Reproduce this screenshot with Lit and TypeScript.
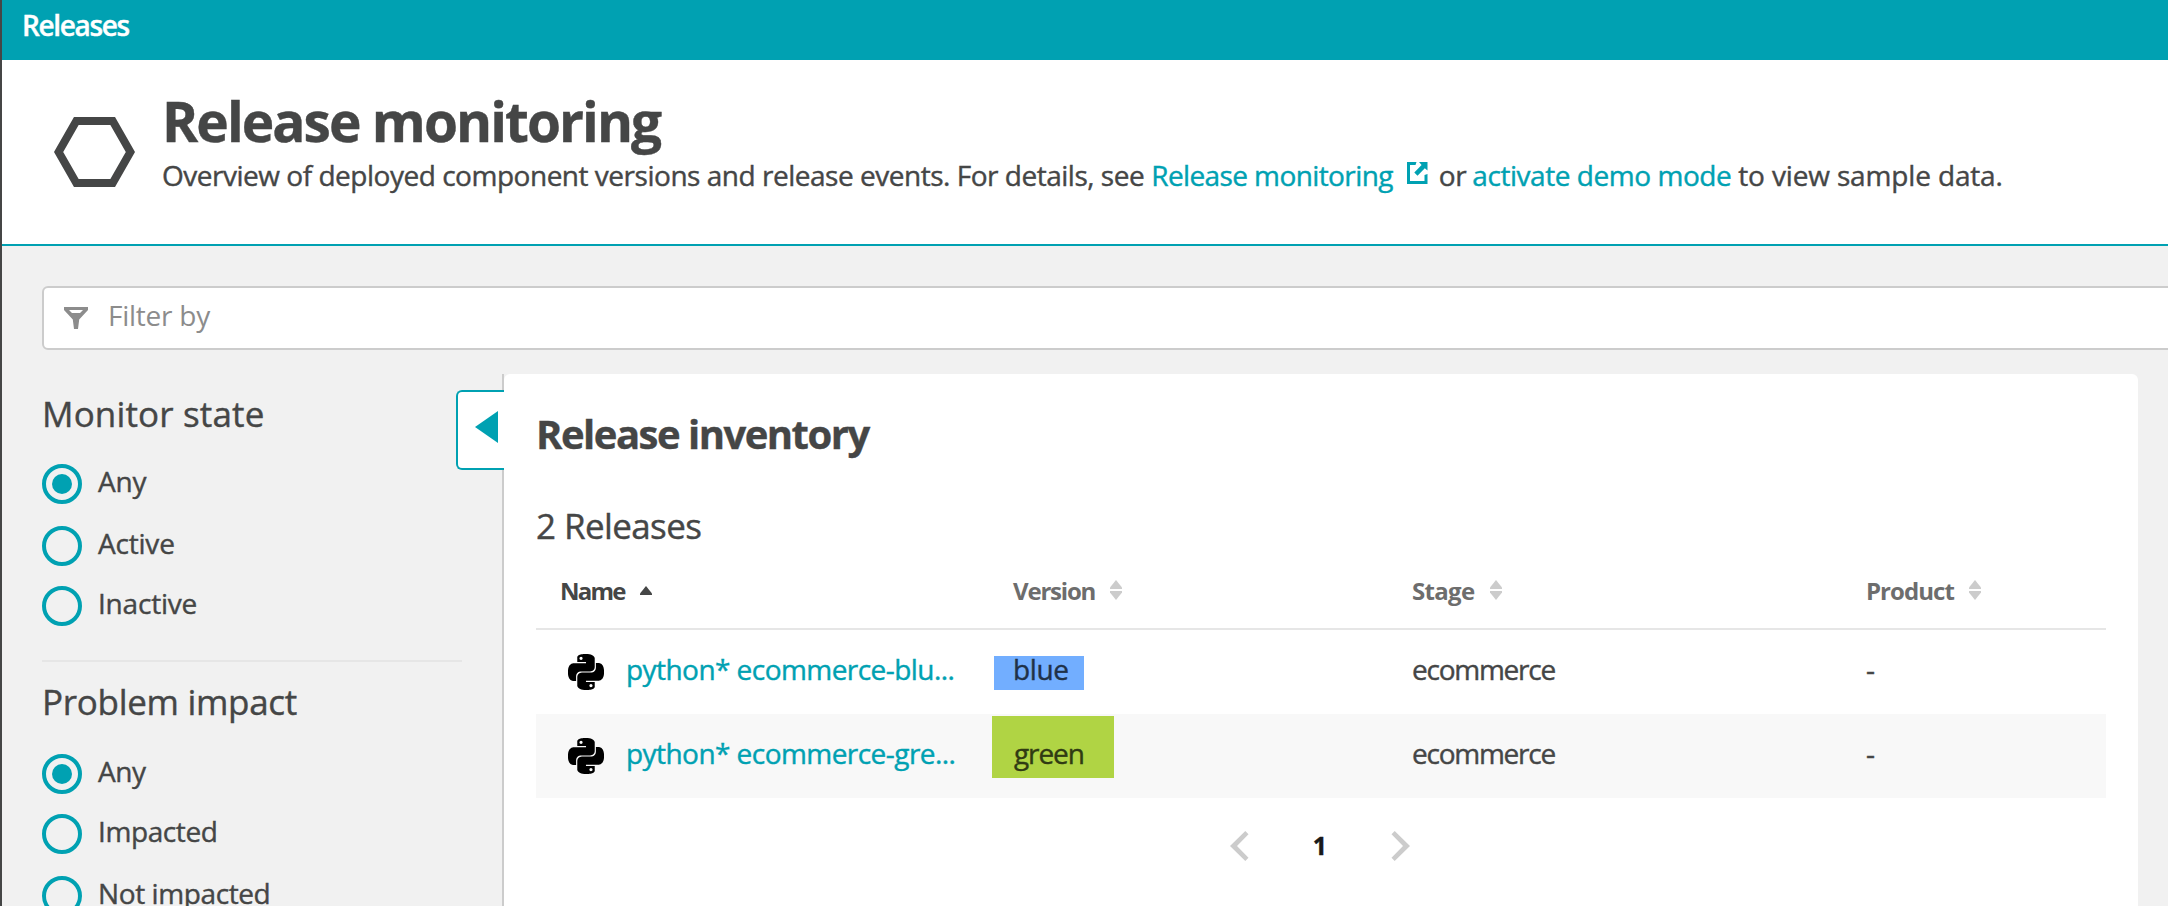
import { LitElement, html, svg, css } from "lit";
import { customElement } from "lit/decorators.js";
import { classMap } from "lit/directives/class-map.js";

const pythonPath =
  "M14.25.18l.9.2.73.26.59.3.45.32.34.34.25.34.16.33.1.3.04.26.02.2-.01.13V8.5l-.05.63-.13.55-.21.46-.26.38-.3.31-.33.25-.35.19-.35.14-.33.1-.3.07-.26.04-.21.02H8.77l-.69.05-.59.14-.5.22-.41.27-.33.32-.27.35-.2.36-.15.37-.1.35-.07.32-.04.27-.02.21v3.06H3.17l-.21-.03-.28-.07-.32-.12-.35-.18-.36-.26-.36-.36-.35-.46-.32-.59-.28-.73-.21-.88-.14-1.05-.05-1.23.06-1.22.16-1.04.24-.87.32-.71.36-.57.4-.44.42-.33.42-.24.4-.16.36-.1.32-.05.24-.01h.16l.06.01h8.16v-.83H6.18l-.01-2.75-.02-.37.05-.34.11-.31.17-.28.25-.26.31-.23.38-.2.44-.18.51-.15.58-.12.64-.1.71-.06.77-.04.84-.02 1.27.05zm-6.3 1.98l-.23.33-.08.41.08.41.23.34.33.22.41.09.41-.09.33-.22.23-.34.08-.41-.08-.41-.23-.33-.33-.22-.41-.09-.41.09zm13.09 3.95l.28.06.32.12.35.18.36.27.36.35.35.47.32.59.28.73.21.88.14 1.04.05 1.23-.06 1.23-.16 1.04-.24.86-.32.71-.36.57-.4.45-.42.33-.42.24-.4.16-.36.09-.32.05-.24.02-.16-.01h-8.22v.82h5.84l.01 2.76.02.36-.05.34-.11.31-.17.29-.25.25-.31.24-.38.2-.44.17-.51.15-.58.13-.64.09-.71.07-.77.04-.84.01-1.27-.04-1.07-.14-.9-.2-.73-.25-.59-.3-.45-.33-.34-.34-.25-.34-.16-.33-.1-.3-.04-.25-.02-.2.01-.13v-5.34l.05-.64.13-.54.21-.46.26-.38.3-.32.33-.24.35-.2.35-.14.33-.1.3-.06.26-.04.21-.02.13-.01h5.84l.69-.05.59-.14.5-.21.41-.28.33-.32.27-.35.2-.36.15-.36.1-.35.07-.32.04-.28.02-.21V6.07h2.09l.14.01zm-6.47 14.25l-.23.33-.08.41.08.41.23.33.33.23.41.08.41-.08.33-.23.23-.33.08-.41-.08-.41-.23-.33-.33-.23-.41-.08-.41.08z";

interface Release {
  name: string;
  version: string;
  stage: string;
  product: string;
}

const releases: Release[] = [
  { name: "python* ecommerce-blu...", version: "blue", stage: "ecommerce", product: "-" },
  { name: "python* ecommerce-gre...", version: "green", stage: "ecommerce", product: "-" },
];

const sortIcon = (ascending = false) => html`<svg class="sort" width="12" height="20" viewBox="0 0 12 20" fill="currentColor">
  ${ascending
    ? svg`<path d="M6 6L12 13.5V15H0V13.5Z" />`
    : svg`<path d="M6 0L12 7.5V9H0V7.5Z" /><path d="M6 20L12 12.5V11H0V12.5Z" />`}
</svg>`;

@customElement("filter-sidebar")
class FilterSidebar extends LitElement {
  static styles = css`
    :host {
      display: block;
      box-sizing: border-box;
      width: 502px;
      flex: none;
      padding: 18px 0 0 40px;
      border-right: 2px solid #cccccc;
    }
    .title {
      margin: 0;
      font-size: 35px;
      line-height: 44px;
      font-weight: 400;
    }
    .monitor .title {
      letter-spacing: 0.15px;
      margin-bottom: 28px;
    }
    .impact .title {
      letter-spacing: -0.3px;
      margin-bottom: 30px;
    }
    .monitor {
      width: 420px;
      padding-bottom: 34px;
      border-bottom: 2px solid #e6e6e6;
    }
    .impact {
      padding-top: 18px;
    }
    .options {
      display: flex;
      flex-direction: column;
    }
    .option {
      display: flex;
      height: 40px;
      gap: 16px;
      margin-bottom: 22px;
    }
    .monitor .option:nth-child(2),
    .impact .option:nth-child(1) {
      margin-bottom: 20px;
    }
    .monitor .option:last-child {
      margin-bottom: 0;
    }
    .radio {
      box-sizing: border-box;
      width: 40px;
      height: 40px;
      border: 4px solid #00a1b2;
      border-radius: 50%;
      display: grid;
      place-items: center;
    }
    .checked::after {
      content: "";
      width: 20px;
      height: 20px;
      border-radius: 50%;
      background: #00a1b2;
    }
    .label {
      line-height: 34px;
      letter-spacing: -0.2px;
    }
    .impact .label {
      letter-spacing: -0.4px;
    }
  `;

  private group(kind: string, title: string, options: string[]) {
    return html`<section class=${kind}>
      <h2 class="title">${title}</h2>
      <div class="options">
        ${options.map(
          (label, i) => html`<div class="option">
            <span class=${classMap({ radio: true, checked: i === 0 })}></span><span class="label">${label}</span>
          </div>`,
        )}
      </div>
    </section>`;
  }

  render() {
    return html`${this.group("monitor", "Monitor state", ["Any", "Active", "Inactive"])}
    ${this.group("impact", "Problem impact", ["Any", "Impacted", "Not impacted"])}`;
  }
}

@customElement("release-inventory")
class ReleaseInventory extends LitElement {
  static styles = css`
    :host {
      display: block;
      position: relative;
      box-sizing: border-box;
      width: 1634px;
      flex: none;
      padding: 34px 32px 0;
      background: #fff;
      border-radius: 6px 6px 0 0;
    }
    .toggle {
      position: absolute;
      left: -48px;
      top: 16px;
      box-sizing: border-box;
      width: 48px;
      height: 80px;
      padding: 19px 0 0 17px;
      border: 2px solid #00a1b2;
      border-right: 0;
      border-radius: 6px 0 0 6px;
      background: #fff;
    }
    .toggle svg {
      display: block;
    }
    .title {
      margin: 0 0 44px;
      font-size: 40px;
      line-height: 52px;
      font-weight: 700;
      letter-spacing: -1.5px;
    }
    .count {
      margin: 0 0 4px;
      font-size: 35px;
      line-height: 44px;
      font-weight: 400;
      letter-spacing: -0.6px;
    }
    .row {
      display: grid;
      grid-template-columns: 476px 399px 454px 1fr;
      height: 84px;
      line-height: 78px;
    }
    .row:nth-child(odd) {
      background: #f8f8f8;
    }
    .row.head {
      height: 76px;
      line-height: 77px;
      background: none;
      border-bottom: 2px solid #e6e6e6;
      font-size: 24px;
      font-weight: 700;
      color: #6d6d6d;
      -webkit-text-stroke: 0;
    }
    .head .cell {
      display: flex;
      gap: 15px;
    }
    .head .name {
      color: #454646;
      padding-left: 24px;
      letter-spacing: -1.8px;
    }
    .head .version {
      padding-left: 1px;
      letter-spacing: -1.2px;
    }
    .head .stage {
      padding-left: 1px;
      letter-spacing: -0.7px;
      gap: 16px;
    }
    .head .product {
      padding-left: 1px;
      letter-spacing: -0.95px;
    }
    .sort {
      margin-top: 28px;
      color: #cccccc;
    }
    .name .sort {
      color: #454646;
    }
    .link {
      display: flex;
      gap: 22px;
      padding-left: 32px;
      color: #00a1b2;
      letter-spacing: -0.55px;
    }
    .python {
      margin-top: 24px;
    }
    .cell {
      position: relative;
    }
    .mark {
      position: absolute;
    }
    .mark.blue {
      left: -18px;
      top: 26px;
      width: 90px;
      height: 34px;
      background: #72aeff;
    }
    .mark.green {
      left: -20px;
      top: 2px;
      width: 122px;
      height: 62px;
      background: #b0d444;
    }
    .value {
      position: relative;
      padding-left: 1px;
      letter-spacing: -0.9px;
    }
    .value.blue {
      color: #1f3148;
      letter-spacing: -0.4px;
    }
    .value.green {
      color: #303b13;
      padding-left: 2px;
      letter-spacing: -1.1px;
    }
    .stage .value {
      letter-spacing: -1.25px;
    }
    .pages {
      display: flex;
      width: 180px;
      margin: 33px 0 0 694px;
      justify-content: space-between;
      line-height: 28px;
      height: 30px;
      font-size: 25px;
      font-weight: 700;
      color: #191919;
    }
  `;

  render() {
    return html`
      <div class="toggle">
        <svg width="24" height="32" viewBox="0 0 24 32"><path d="M0 16L23 0V32Z" fill="#00a1b2" /></svg>
      </div>
      <h2 class="title">Release inventory</h2>
      <h3 class="count">${releases.length} Releases</h3>
      <div>
        <div class="row head">
          <div class="cell name">Name ${sortIcon(true)}</div>
          <div class="cell version">Version ${sortIcon()}</div>
          <div class="cell stage">Stage ${sortIcon()}</div>
          <div class="cell product">Product ${sortIcon()}</div>
        </div>
        ${releases.map(
          (r) => html`<div class="row">
            <div class="link">
              <svg class="python" width="36" height="36" viewBox="0 0 24 24"><path d=${pythonPath} /></svg>
              <span>${r.name}</span>
            </div>
            <div class="cell"><span class="mark ${r.version}"></span><span class="value ${r.version}">${r.version}</span></div>
            <div class="cell stage"><span class="value">${r.stage}</span></div>
            <div class="cell"><span class="value">${r.product}</span></div>
          </div>`,
        )}
      </div>
      <div class="pages">
        <svg width="19" height="30" viewBox="0 0 19 30"><path d="M0 15L15.3 0L18.5 3.2L7 15L18.5 26.8L15.3 30Z" fill="#ccc" /></svg>
        <span>1</span>
        <svg width="19" height="30" viewBox="0 0 19 30"><path d="M19 15L3.7 0L.5 3.2L12 15L.5 26.8L3.7 30Z" fill="#ccc" /></svg>
      </div>
    `;
  }
}

@customElement("app-root")
class AppRoot extends LitElement {
  static styles = css`
    :host {
      display: flex;
      flex-direction: column;
      box-sizing: border-box;
      height: 906px;
      overflow: hidden;
      border-left: 2px solid #454646;
      background: #f1f1f1;
      color: #454646;
      font-family: "Open Sans", "Noto Sans", sans-serif;
      font-size: 28px;
      -webkit-text-stroke: 0.4px;
    }
    .topbar {
      flex: none;
      height: 60px;
      padding-left: 20px;
      background: #00a1b2;
      color: #fff;
      font-weight: 600;
      line-height: 50px;
      letter-spacing: -1.35px;
    }
    .intro {
      flex: none;
      display: flex;
      height: 184px;
      padding-left: 52px;
      gap: 27px;
      background: #fff;
      border-bottom: 2px solid #00a1b2;
    }
    .hexagon {
      margin-top: 57px;
    }
    .heading {
      padding-top: 29px;
    }
    .title {
      margin: 0;
      font-size: 55px;
      line-height: 64px;
      font-weight: 700;
      letter-spacing: -1.95px;
    }
    .description {
      display: flex;
      margin: 0;
      line-height: 44px;
      white-space: nowrap;
    }
    .lead {
      letter-spacing: -0.48px;
    }
    .docs {
      display: flex;
      margin-left: 7px;
      gap: 14px;
      color: #00a1b2;
      letter-spacing: -0.6px;
    }
    .docs svg {
      margin-top: 9px;
    }
    .or {
      margin-left: 11px;
      letter-spacing: -0.4px;
    }
    .demo {
      margin-left: 6px;
      color: #00a1b2;
      letter-spacing: -0.45px;
    }
    .tail {
      margin-left: 7px;
      letter-spacing: -0.15px;
    }
    .filter {
      flex: none;
      display: flex;
      box-sizing: border-box;
      height: 64px;
      margin: 40px -10px 24px 40px;
      padding-left: 20px;
      gap: 20px;
      border: 2px solid #cccccc;
      border-radius: 6px;
      background: #fff;
      color: #8c8c8c;
      line-height: 54px;
      letter-spacing: -0.25px;
      -webkit-text-stroke: 0;
    }
    .filter svg {
      margin-top: 19px;
    }
    .body {
      flex: 1;
      display: flex;
      min-height: 0;
    }
  `;

  render() {
    return html`
      <header class="topbar">Releases</header>
      <section class="intro">
        <svg class="hexagon" width="81" height="70" viewBox="0 0 81 70" fill="none" stroke="#454646" stroke-width="8">
          <path d="M4.6 35L22.3 4H58.7L76.4 35L58.7 66H22.3Z" />
        </svg>
        <div class="heading">
          <h1 class="title">Release monitoring</h1>
          <p class="description">
            <span class="lead">Overview of deployed component versions and release events. For details, see</span>
            <a class="docs"
              >Release monitoring
              <svg width="21" height="22" viewBox="0 0 21 22" fill="#00a1b2">
                <path d="M9.5 0H0V22H20.5V12L17.5 13V19H3V3H8.5Z" />
                <path d="M12 0H20.5V8.5L17.8 6.2L10.5 13.8L7.3 10.6L14.6 3Z" /></svg
            ></a>
            <span class="or">or</span>
            <a class="demo">activate demo mode</a>
            <span class="tail">to view sample data.</span>
          </p>
        </div>
      </section>
      <div class="filter">
        <svg width="24" height="22" viewBox="0 0 24 22" fill="#8c8c8c" fill-rule="evenodd">
          <path d="M0 0H24V3L15.2 12.5L14 22H10L8.8 12.5L0 3ZM5 3L8 6H16L19 3Z" />
        </svg>
        <span>Filter by</span>
      </div>
      <main class="body">
        <filter-sidebar></filter-sidebar>
        <release-inventory></release-inventory>
      </main>
    `;
  }
}
